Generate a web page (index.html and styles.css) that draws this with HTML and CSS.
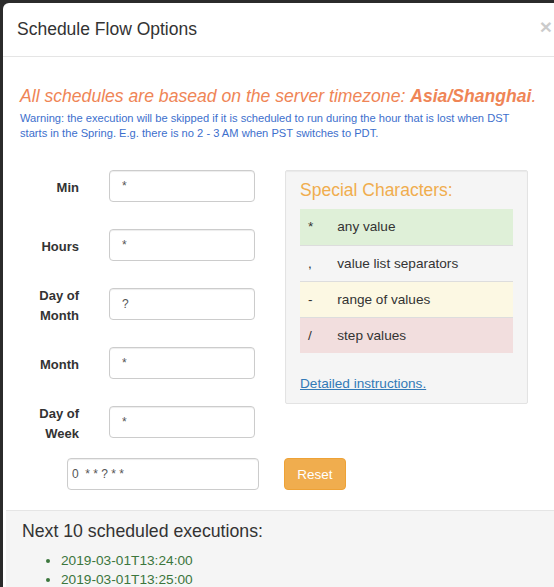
FILE: index.html
```html
<!DOCTYPE html>
<html>
<head>
<meta charset="utf-8">
<link rel="stylesheet" href="styles.css">
</head>
<body>
<div class="modal">
  <div class="modal-header">
    <h4 class="modal-title">Schedule Flow Options</h4>
    <span class="close">&times;</span>
  </div>
  <div class="modal-body">
    <p class="tz">All schedules are basead on the server timezone: <b>Asia/Shanghai</b>.</p>
    <p class="warn">Warning: the execution will be skipped if it is scheduled to run during the hour that is lost when DST starts in the Spring. E.g. there is no 2 - 3 AM when PST switches to PDT.</p>
    <div class="cron">
      <div class="fields">
        <div class="row"><label>Min</label><input class="field" type="text" value="*"></div>
        <div class="row"><label>Hours</label><input class="field" type="text" value="*"></div>
        <div class="row"><label>Day of<br>Month</label><input class="field" type="text" value="?"></div>
        <div class="row"><label>Month</label><input class="field" type="text" value="*"></div>
        <div class="row"><label>Day of<br>Week</label><input class="field" type="text" value="*"></div>
      </div>
      <div class="special">
        <h4 class="special-title">Special Characters:</h4>
        <table class="chars">
          <tr class="success"><td class="sym">*</td><td>any value</td></tr>
          <tr><td class="sym">,</td><td>value list separators</td></tr>
          <tr class="warning"><td class="sym">-</td><td>range of values</td></tr>
          <tr class="danger"><td class="sym">/</td><td>step values</td></tr>
        </table>
        <a class="link" href="#">Detailed instructions.</a>
      </div>
    </div>
    <div class="expr-row">
      <input class="expr" type="text" value="0  * * ? * *">
      <button class="reset">Reset</button>
    </div>
  </div>
  <div class="next">
    <h4 class="next-title">Next 10 scheduled executions:</h4>
    <ul class="times">
      <li>2019-03-01T13:24:00</li>
      <li>2019-03-01T13:25:00</li>
    </ul>
  </div>
</div>
</body>
</html>
```
FILE: styles.css
```css
html, body {
  margin: 0;
  height: 100%;
  overflow: hidden;
}
body {
  background: #2b2b2b;
  padding: 3px 0 0 3px;
  font-family: "Liberation Sans", Arial, sans-serif;
  color: #333;
  box-sizing: border-box;
}
.modal {
  background: #fff;
  border-radius: 6px 0 0 0;
  height: 100%;
  overflow: hidden;
}
.modal-header {
  position: relative;
  height: 53px;
  border-bottom: 1px solid #e5e5e5;
  display: flex;
  align-items: center;
  padding: 0 14px;
}
.modal-title {
  margin: 0;
  font-size: 17.5px;
  font-weight: normal;
  color: #333;
}
.close {
  position: absolute;
  right: 2px;
  top: 12px;
  font-size: 21px;
  font-weight: bold;
  color: #000;
  opacity: 0.2;
}
.modal-body {
  padding: 29px 17px 0;
}
.tz {
  margin: 0;
  font-size: 17.6px;
  font-style: italic;
  color: #ef8556;
  line-height: 20px;
  white-space: nowrap;
}
.tz b { font-weight: bold; }
.warn {
  margin: 5px 0 0;
  font-size: 11.15px;
  line-height: 15px;
  color: #3d6fcd;
  width: 515px;
}
.cron {
  display: flex;
  margin-top: 29px;
}
.fields {
  display: flex;
  flex-direction: column;
  gap: 27px;
  width: 265px;
}
.row {
  display: flex;
  align-items: center;
  height: 32px;
}
label {
  width: 59px;
  text-align: right;
  font-weight: bold;
  font-size: 13px;
  line-height: 20px;
  margin-right: 30px;
  padding-top: 4px;
  flex: none;
}
.field, .expr {
  height: 32px;
  box-sizing: border-box;
  border: 1px solid #ccc;
  border-radius: 4px;
  padding: 0 12px;
  font-family: "Liberation Sans", Arial, sans-serif;
  font-size: 12px;
  color: #555;
  box-shadow: inset 0 1px 1px rgba(0,0,0,0.075);
}
.field { width: 146px; }
.special {
  width: 243px;
  height: 234px;
  box-sizing: border-box;
  background: #f5f5f5;
  border: 1px solid #e3e3e3;
  border-radius: 2px;
  padding: 8px 14px 0;
  box-shadow: inset 0 1px 1px rgba(0,0,0,0.05);
}
.special-title {
  margin: 0;
  font-size: 17.5px;
  font-weight: normal;
  color: #f0ad4e;
  line-height: 22px;
}
.chars {
  margin-top: 8px;
  width: 213px;
  border-collapse: collapse;
  font-size: 13.6px;
}
.chars td {
  height: 36px;
  padding: 0 8px;
  border-top: 1px solid #ddd;
  box-sizing: border-box;
}
.chars .sym { width: 12px; padding-right: 16px; }
.chars tr:first-child td { border-top: none; }
.success td { background: #dff0d8; }
.warning td { background: #fcf8e3; }
.danger td { background: #f2dede; }
.link {
  display: inline-block;
  margin-top: 23px;
  font-size: 13.6px;
  color: #337ab7;
  text-decoration: underline;
}
.expr-row {
  display: flex;
  align-items: center;
  margin-top: 20px;
  padding-left: 47px;
  height: 32px;
}
.expr { width: 192px; padding: 0 4px; }
.reset {
  margin-left: 25px;
  height: 32px;
  width: 62px;
  background: #f0ad4e;
  border: 1px solid #eea236;
  border-radius: 4px;
  color: #fff;
  font-family: "Liberation Sans", Arial, sans-serif;
  font-size: 13.5px;
}
.next {
  margin: 20px 0 0 3px;
  background: #f5f5f5;
  border-top: 1px solid #e5e5e5;
  padding: 9px 16px 20px;
}
.next-title {
  margin: 0;
  font-size: 17.7px;
  font-weight: normal;
  line-height: 22px;
}
.times {
  margin: 9px 0 0;
  padding-left: 39px;
  font-size: 13.7px;
  line-height: 19px;
  color: #3c763d;
}
```
